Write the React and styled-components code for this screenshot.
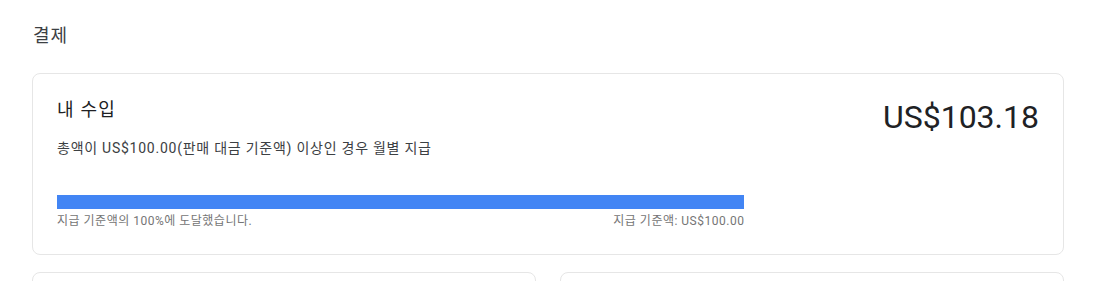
import React from "react";
import styled, { createGlobalStyle } from "styled-components";

const Global = createGlobalStyle`
  html, body { margin: 0; padding: 0; background: #ffffff; }
  body { font-family: Roboto, "Noto Sans CJK KR", "Noto Sans", sans-serif; color: #202124; }
  * { box-sizing: border-box; }
`;

const Page = styled.main`
  padding: 24px 30px 0 32px;
  display: flex;
  flex-direction: column;
`;

const PageTitle = styled.h1`
  margin: 0 0 25px 1px;
  font-size: 18px;
  line-height: 24px;
  font-weight: 400;
  letter-spacing: 1px;
  color: #3c4043;
`;

const Card = styled.section`
  border: 1px solid #e6e6e6;
  border-radius: 8px;
  background: #fff;
  padding: ${(p) => p.$pad || "24px 24px 25px 24px"};
  min-height: ${(p) => p.$minHeight || "auto"};
`;

const HeaderRow = styled.div`
  display: flex;
  justify-content: space-between;
  align-items: flex-start;
`;

const LeftCol = styled.div`
  display: flex;
  flex-direction: column;
`;

const CardTitle = styled.h2`
  margin: 0;
  font-size: 18px;
  line-height: 24px;
  font-weight: 400;
  letter-spacing: 1.2px;
  color: #202124;
`;

const Subtitle = styled.p`
  margin: 16px 0 0 0;
  font-size: 14px;
  line-height: 20px;
  letter-spacing: 0.75px;
  color: #3c4043;
`;

const Amount = styled.div`
  font-size: 32px;
  line-height: 40px;
  font-weight: 400;
  color: #202124;
  margin-top: -1px;
`;

const Progress = styled.div`
  width: 70%;
  margin-top: 37px;
`;

const Track = styled.div`
  height: 14px;
  background: #e8eaed;
`;

const Fill = styled.div`
  height: 100%;
  background: #4285f4;
`;

const Labels = styled.div`
  display: flex;
  justify-content: space-between;
  margin-top: 4px;
  font-size: 12px;
  line-height: 16px;
  letter-spacing: 0.5px;
  color: #757575;
`;

const Grid = styled.div`
  display: grid;
  grid-template-columns: 1fr 1fr;
  gap: 24px;
  margin-top: 17px;
`;

export default function App() {
  const pct = 100;
  return (
    <>
      <Global />
      <Page>
        <PageTitle>결제</PageTitle>
        <Card>
          <HeaderRow>
            <LeftCol>
              <CardTitle>내 수입</CardTitle>
              <Subtitle>총액이 US$100.00(판매 대금 기준액) 이상인 경우 월별 지급</Subtitle>
            </LeftCol>
            <Amount>US$103.18</Amount>
          </HeaderRow>
          <Progress>
            <Track>
              <Fill style={{ width: `${pct}%` }} />
            </Track>
            <Labels>
              <span>지급 기준액의 100%에 도달했습니다.</span>
              <span>지급 기준액: US$100.00</span>
            </Labels>
          </Progress>
        </Card>
        <Grid>
          <Card $minHeight="120px" />
          <Card $minHeight="120px" />
        </Grid>
      </Page>
    </>
  );
}
